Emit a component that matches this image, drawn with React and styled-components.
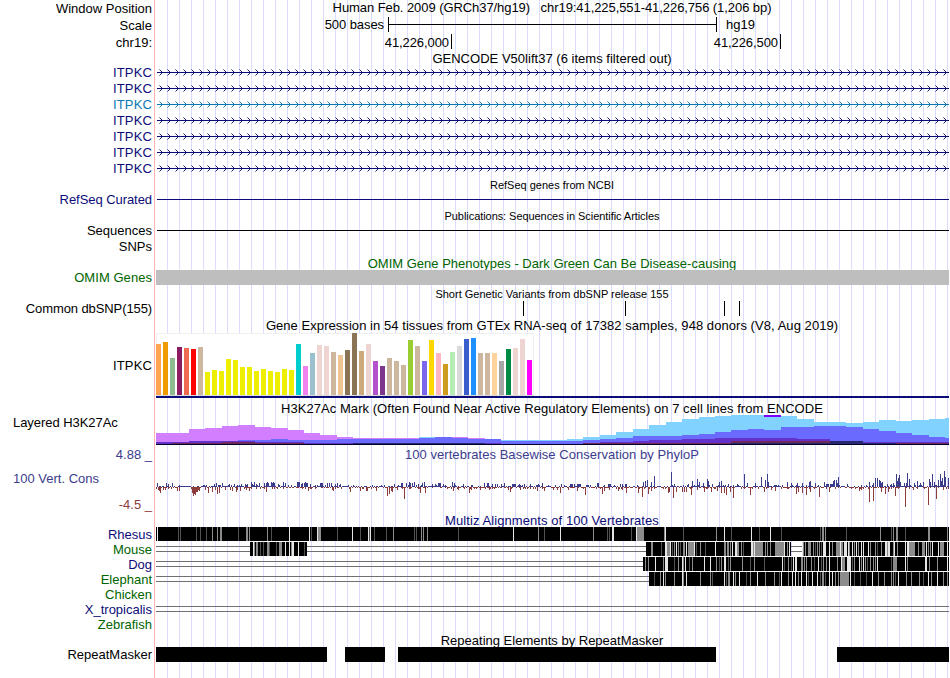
import React from 'react';
import styled, { createGlobalStyle } from 'styled-components';

const GlobalStyle = createGlobalStyle`
  body {
    margin: 0;
    background: #fff;
  }
`;

const NAVY = '#0c0c78';
const GREEN = '#006400';
const X0 = 156; // genome position 41,225,551 starts here
const WIDTH = 793;

const Browser = styled.main`
  display: flex;
  flex-direction: column;
  width: 949px;
  height: 678px;
  overflow: hidden;
  color: #000;
  font: 13px/15px 'Liberation Sans', Arial, sans-serif;
  background:
    linear-gradient(#ffb4b4, #ffb4b4) 154px 0 / 1px 100% no-repeat,
    repeating-linear-gradient(90deg, #dcdcff 0 1px, transparent 1px 12px) 167px 0 no-repeat;
`;

const Row = styled.div`
  display: grid;
  grid-template-columns: 152px ${WIDTH}px;
  column-gap: 4px;
  flex: none;
  height: ${(p) => p.$height}px;
`;

const Label = styled.div`
  align-self: center;
  text-align: right;
  white-space: nowrap;
  color: ${(p) => p.$color || '#000'};
  letter-spacing: ${(p) => p.$spacing || 0}px;
`;

const SideLabel = styled(Label)`
  align-self: start;
  text-align: left;
  padding-left: 13px;
`;

const Title = styled.div`
  display: flex;
  align-items: center;
  justify-content: center;
  box-sizing: border-box;
  height: ${(p) => p.$height}px;
  padding: ${(p) => p.$drop || 0}px 1px 0 0;
  color: ${(p) => p.$color || '#000'};
  font-size: ${(p) => (p.$small ? 11 : 13)}px;
  letter-spacing: ${(p) => p.$spacing || 0}px;
  white-space: pre;
`;

const Ruler = styled.div`
  display: flex;
  height: 15px;
`;

const ScaleText = styled.span`
  width: 228px;
  margin-right: 4px;
  text-align: right;
  letter-spacing: -0.08px;
`;

const ScaleBar = styled.div`
  box-sizing: border-box;
  width: 329px;
  margin-right: 9px;
  border: solid #000;
  border-width: 0 1px;
  background: linear-gradient(#000, #000) 0 7px / 100% 1px no-repeat;
`;

const Position = styled.span`
  box-sizing: border-box;
  width: ${(p) => p.$width}px;
  padding: 1px 2px 0 0;
  border-right: 1px solid #000;
  text-align: right;
  letter-spacing: -0.08px;
`;

const Drawing = styled.svg`
  display: block;
  width: ${WIDTH}px;
  height: ${(p) => p.$height}px;
  overflow: visible;
`;

const Line = styled.div`
  height: 1px;
  margin: 7px 0 0 1px;
  background: ${(p) => p.$color || '#000'};
`;

const Band = styled.div`
  height: 15px;
  background: #bebebe;
`;

const WigLabels = styled.div`
  display: flex;
  flex-direction: column;
  justify-content: space-between;
  padding-top: 8px;
  height: 41px;
`;

const LimitLabel = styled(Label)`
  align-self: flex-end;
`;

const TitleRow = ({ height, side, children, ...title }) => (
  <Row $height={height}>
    {side || <span />}
    <Title $height={height} {...title}>{children}</Title>
  </Row>
);

const GENES = [NAVY, NAVY, '#0c78b4', NAVY, NAVY, NAVY, NAVY];
const ARROWS = Array.from({ length: 99 }, (_, i) => 3.5 + i * 8);

const GeneTrack = ({ color }) => (
  <Drawing $height={16} stroke={color} fill="none">
    <path d="M1 8.5H793" shapeRendering="crispEdges" />
    <path d={ARROWS.map((x) => `M${x} 5.5l3 3l-3 3`).join('')} strokeWidth="0.95" />
  </Drawing>
);

// [color, height] per tissue
const TISSUES = [
  ['#ffa54f', 51], ['#ee9a00', 53], ['#8fbc8f', 37], ['#8b1c62', 48], ['#ee6a50', 47],
  ['#ff0000', 46], ['#cdb79e', 48], ['#eeee00', 23], ['#eeee00', 25], ['#eeee00', 24],
  ['#eeee00', 36], ['#eeee00', 35], ['#eeee00', 28], ['#eeee00', 28], ['#eeee00', 24],
  ['#eeee00', 26], ['#eeee00', 24], ['#eeee00', 23], ['#eeee00', 26], ['#eeee00', 25],
  ['#00cdcd', 51], ['#ee82ee', 29], ['#9ac0cd', 42], ['#eed5d2', 50], ['#eed5d2', 49],
  ['#cdb79e', 43], ['#eec591', 40], ['#8b7355', 45], ['#8b7355', 62], ['#cdaa7d', 44],
  ['#eed5d2', 51], ['#b452cd', 34], ['#7a378b', 29], ['#cdb79e', 37], ['#cdb79e', 34],
  ['#cdb79e', 30], ['#9acd32', 55], ['#cdb79e', 49], ['#7a67ee', 34], ['#ffd700', 55],
  ['#ffb6c1', 42], ['#cd9b1d', 31], ['#b4eeb4', 43], ['#d9d9d9', 49], ['#3a5fcd', 56],
  ['#1e90ff', 57], ['#cdb79e', 42], ['#cdb79e', 42], ['#ffd39b', 42], ['#a6a6a6', 34],
  ['#008b45', 46], ['#eed5d2', 47], ['#eed5d2', 56], ['#ff00ff', 35],
];

const GtexTrack = () => (
  <Drawing $height={65} shapeRendering="crispEdges">
    <rect width="378" height="63" fill="#f0f0f0" />
    <rect x="1" y="1" width="376" height="61" fill="#fff" />
    <rect y="62" width="378" height="1" fill="#dcdcdc" />
    {TISSUES.map(([color, h], i) => (
      <rect key={i} x={i * 7} y={62 - h} width="5" height={h} fill={color} />
    ))}
    <rect y="63" width={WIDTH} height="2" fill="#0c0c78" />
  </Drawing>
);

// heights of each cell line, one value for every 25 bases
const CELL_LINES = [
  {
    color: '#82d2ff',
    values: [0, 0, 0, 0, 0, 0, 0, 0, 0, 0, 0, 0, 0, 0, 0, 0, 7, 7, 0, 0, 0, 4, 4, 4, 4, 5, 7, 9, 12, 15, 19,
      22, 25, 27, 28, 29, 29, 29, 28, 25, 22, 22, 21, 22, 24, 23, 24, 25, 26],
  },
  {
    color: '#d27fff',
    values: [11, 11, 15, 16, 18, 19, 17, 16, 14, 11, 9, 7, 6, 6, 6, 6, 6, 7, 7, 6, 4],
  },
  {
    color: '#6a6aff',
    values: [2, 2, 2, 3, 3, 4, 4, 5, 4, 4, 4, 5, 5, 5, 5, 5, 6, 7, 6, 5, 5, 3, 3, 3, 3, 3, 4, 5, 6, 8, 8, 8,
      9, 10, 12, 14, 15, 14, 17, 17, 18, 18, 17, 15, 13, 11, 9, 7, 6],
  },
  {
    color: '#6432c8',
    values: [2, 2, 3, 3, 3, 3, 2, 2, 2, 1, 1, 1, 1, 1, 1, 1, 1, 1, 1, 1, 1, 0, 0, 0, 0, 0, 1, 2, 2, 3, 4, 4,
      5, 5, 6, 6, 6, 6, 6, 5, 5, 3, 3, 2, 2, 2, 2, 2, 2],
  },
  {
    color: '#6e285a',
    values: [0, 1, 1, 1, 2, 2, 1, 1, 1, 0, 0, 0, 0, 0, 0, 0, 0, 0, 0, 0, 0, 0, 0, 0, 0, 0, 1, 1, 1, 1, 1, 1,
      1, 1, 1, 3, 3, 3, 3, 3, 3, 2, 1, 1, 1, 1, 1, 1, 1],
  },
  {
    color: '#28286e',
    values: [0, 0, 0, 0, 0, 0, 0, 0, 0, 0, 0, 0, 1, 1, 1, 1, 1, 1, 1, 1, 0, 0, 0, 0, 0, 0, 0, 0, 0, 0, 0, 0,
      0, 0, 0, 1, 1, 1, 1, 1, 1, 3, 3, 1, 1, 0, 0, 0, 0],
  },
];

const edge = (i) => Math.min(WIDTH, Math.round(i * 16.44));

const LayeredTrack = () => (
  <Drawing $height={30} shapeRendering="crispEdges">
    {CELL_LINES.map(({ color, values }) => (
      <g key={color} fill={color}>
        {values.map((v, i) => (
          <rect key={i} x={edge(i)} y={29 - v} width={edge(i + 1) - edge(i)} height={v} />
        ))}
      </g>
    ))}
    <rect x="608" width="17" height="2" fill="#8000ff" />
    <rect y="29" width={WIDTH} height="1" fill="#000028" />
  </Drawing>
);

const CONSERVED = [
  [157, 4], [166, 4], [168, 3], [172, 4], [214, 3], [216, 4], [222, 4], [229, 3], [234, 3], [241, 3],
  [245, 3], [247, 3], [251, 5], [252, 3], [254, 5], [256, 3], [259, 4], [264, 4], [266, 4], [267, 5],
  [268, 4], [271, 5], [272, 4], [273, 5], [274, 4], [278, 3], [283, 5], [285, 4], [297, 5], [298, 5],
  [299, 5], [301, 3], [302, 4], [304, 4], [305, 5], [306, 4], [307, 4], [310, 3], [315, 2], [320, 4],
  [321, 4], [322, 4], [327, 4], [329, 4], [331, 4], [335, 3], [337, 4], [340, 3], [384, 2], [394, 3],
  [401, 4], [402, 4], [406, 4], [409, 5], [410, 4], [412, 4], [414, 5], [418, 3], [422, 4], [424, 5],
  [432, 3], [435, 3], [438, 4], [439, 4], [440, 4], [443, 3], [445, 2], [452, 5], [454, 4], [463, 3],
  [484, 4], [487, 4], [488, 4], [492, 3], [495, 3], [497, 3], [501, 3], [504, 4], [512, 3], [513, 3],
  [514, 3], [515, 3], [519, 3], [524, 3], [530, 3], [538, 3], [542, 4], [548, 2], [561, 3], [564, 2],
  [570, 3], [571, 3], [572, 3], [574, 3], [577, 3], [578, 3], [579, 3], [580, 3], [588, 2], [597, 4],
  [598, 4], [608, 3], [609, 3], [610, 3], [620, 3], [622, 3], [625, 3], [626, 3], [643, 5], [645, 6],
  [647, 7], [651, 5], [654, 11], [671, 15], [674, 3], [688, 3], [692, 6], [697, 8], [699, 5], [703, 4],
  [707, 8], [708, 6], [712, 3], [719, 5], [721, 6], [728, 3], [737, 3], [744, 13], [747, 4], [755, 4],
  [761, 10], [765, 7], [767, 13], [768, 5], [774, 2], [787, 5], [791, 4], [797, 4], [802, 4], [809, 5],
  [810, 6], [815, 4], [824, 5], [826, 3], [827, 3], [828, 3], [830, 3], [831, 3], [832, 3], [833, 6],
  [834, 7], [836, 7], [837, 4], [838, 10], [847, 3], [869, 5], [873, 4], [875, 9], [877, 9], [879, 7],
  [880, 6], [881, 4], [882, 5], [887, 3], [891, 3], [893, 4], [896, 13], [897, 6], [898, 9], [899, 12],
  [900, 5], [904, 4], [906, 4], [907, 14], [909, 8], [914, 4], [917, 6], [920, 4], [923, 5], [929, 8],
  [930, 5], [932, 13], [934, 5], [938, 7], [940, 13], [941, 6], [942, 9], [944, 16], [945, 10], [948, 9],
];

const ACCELERATED = [
  [158, 3], [159, 4], [160, 6], [163, 3], [165, 3], [177, 4], [179, 4], [192, 6], [193, 9], [194, 7],
  [195, 8], [196, 5], [197, 5], [198, 3], [199, 4], [205, 3], [208, 6], [212, 5], [215, 3], [217, 7],
  [219, 6], [225, 3], [230, 3], [232, 4], [236, 5], [237, 3], [240, 4], [246, 3], [249, 4], [260, 2],
  [266, 5], [308, 4], [332, 3], [333, 4], [350, 5], [360, 4], [366, 4], [367, 4], [376, 4], [387, 9],
  [389, 7], [391, 4], [392, 5], [397, 3], [404, 12], [420, 6], [425, 6], [453, 4], [458, 3], [469, 6],
  [471, 3], [480, 3], [489, 3], [508, 3], [510, 5], [520, 3], [537, 4], [544, 4], [553, 3], [557, 3],
  [560, 6], [568, 3], [577, 4], [585, 8], [602, 7], [604, 4], [609, 3], [618, 4], [622, 3], [626, 6],
  [638, 6], [642, 10], [648, 7], [651, 4], [668, 6], [669, 5], [673, 11], [676, 5], [682, 5], [684, 5],
  [686, 5], [691, 8], [697, 3], [704, 5], [711, 5], [717, 4], [721, 6], [724, 6], [726, 8], [730, 5],
  [733, 11], [750, 8], [764, 5], [771, 3], [775, 4], [796, 7], [798, 5], [802, 6], [806, 8], [810, 5],
  [819, 10], [829, 5], [859, 4], [861, 3], [869, 15], [873, 14], [881, 5], [885, 7], [888, 5], [895, 9],
  [905, 20], [913, 3], [928, 18], [936, 12], [943, 3],
];

// small scores between the peaks
const noise = (x) => {
  const n = Math.sin(x * 12.9898) * 43758.5453;
  return n - Math.floor(n);
};
const QUIET = Array.from({ length: WIDTH }, (_, i) => {
  const n = noise(i + 1);
  if ((i > 23 && i < 35) || (i > 185 && i < 192)) return [i, 1];
  if (n < 0.16) return [i, 2];
  if (n < 0.52) return [i, 1];
  if (n < 0.88) return [i, -1];
  return [i, -2];
});

const WiggleTrack = () => (
  <Drawing $height={49} shapeRendering="crispEdges">
    {QUIET.map(([x, v]) => (
      <rect key={x} x={x} y={v > 0 ? 24 - v : 24} width="1" height={Math.abs(v)} fill={v > 0 ? '#3c3c8c' : '#8c3c3c'} />
    ))}
    <g fill="#3c3c8c">
      {CONSERVED.map(([x, h]) => <rect key={x} x={x - X0} y={24 - h} width="1" height={h} />)}
    </g>
    <g fill="#8c3c3c">
      {ACCELERATED.map(([x, h]) => <rect key={x} x={x - X0} y="24" width="1" height={h} />)}
    </g>
  </Drawing>
);

const SHADES = { w: '#e6e6e6', g: '#8c8c8c', d: '#505050' };

// marks are "<x><shade>" or "<x><shade><width>"
const SPECIES = [
  {
    name: 'Rhesus',
    color: NAVY,
    blocks: [[156, 949]],
    marks: '157w 178d 180d 196d 200d 206d 212g 217g 220g2 238d 246g2 249g 267g 271d 289w 309w 311d 317w 318g3 337d 352w 360d 368w 370w 369d 374d 386d 393g 414d 416d 421g 423g 427g 458d 513w 538g 544d 560w 593g 607d 609d 612w2 631d 636w 637g7 664g 665w 683d 716g 724w 731d 751w 759d 770w 781d 820d 822g 823g 825g 846d 880g 891d 893g 896g2 905d 928g2 947g',
  },
  {
    name: 'Mouse',
    color: GREEN,
    chain: true,
    blocks: [[250, 307], [646, 791], [802, 949]],
    marks: '253w 254g 256g2 260d 263d 267g2 269d 276d 279g3 285w 289w 291g 292w2 298w 304d 651g2 661d 665w2 667g3 670w 672d 674g 676w 678g 680d 683g2 686w 688g6 694w 696d 700g 705d 715w 724g2 727g2 730g 732w 735w2 737g2 741g 743d 751w2 753g 754w 755g8 765g 767g 770g 775g9 784w 787g 789w 802w 803g 805g 808g3 813g 815d 817g 819g 821d 823w 824w2 829w 832g 836g4 840w 841g2 844w3 848w 849g 852w 854g 856w 858g 861w 863w 868w 870g 875g 877d 881g 885w2 887g 888w 889w 893g 894w 897g 905w 907w2 909g6 918g 922g2 924g 926w 928g 930g 932w 938w 940g4 947w',
  },
  {
    name: 'Dog',
    color: NAVY,
    chain: true,
    blocks: [[643, 949]],
    marks: '645g 648g 655w 663g 665w3 674d 678g 682w 683g 685w 689d 692g 704w 710w 716g 719d 721g 724w2 728d 730g 742g 750d 754g 764d 782w 784d 788g 791d 793w 795w2 801g2 804g 806g 811g 814d 818w 821d 823g 826g 829w 837g 841w 842g3 847w 848w3 852d 854g 859w 861g 863w 865g 867d 870g 873g 875g 877w 891d 893g4 905w 907g 925w2 929g 937g 947w',
  },
  {
    name: 'Elephant',
    color: GREEN,
    chain: true,
    blocks: [[649, 949]],
    marks: '654d 660g 663w 665g 674g 682w 683g 686w 700g 710g 712d 724w 726d 728g2 733w 735g 739w 746d 750g 757w 765g 774g 779d 781w 788g 792w 795w 798g 801w 806w 808d 812w 817w 820d 822g2 825d 829w 832w 835g 838g 840g9 850w 854d 860d 866d 872w 878g 884g 891g 893g 895d 898w 906g 911g 919g 923d 928w 931g 937w 943g 947g',
  },
  { name: 'Chicken', color: GREEN, blocks: [], marks: '' },
  { name: 'X_tropicalis', color: NAVY, chain: true, blocks: [], marks: '' },
  { name: 'Zebrafish', color: GREEN, blocks: [], marks: '' },
];

const AlignmentTrack = ({ chain, blocks, marks }) => (
  <Drawing $height={15} shapeRendering="crispEdges">
    {chain && <path d="M0 4.5H793M0 9.5H793" stroke="#707070" />}
    {blocks.map(([from, to]) => (
      <rect key={from} x={from - X0} width={to - from} height="14" />
    ))}
    {marks && marks.split(' ').map((mark) => {
      const [, x, shade, w] = mark.match(/(\d+)([wgd])(\d*)/);
      return <rect key={mark} x={x - X0} width={w || 1} height="14" fill={SHADES[shade]} />;
    })}
  </Drawing>
);

const SNPS = [523, 625, 724, 739];
const REPEATS = [[156, 327], [345, 385], [398, 716], [837, 949]];

const App = () => (
  <>
    <GlobalStyle />
    <Browser>
      <Row $height={17}>
        <Label>Window Position</Label>
        <Title $height={15} $spacing={-0.07}>{'Human Feb. 2009 (GRCh37/hg19)   chr19:41,225,551-41,226,756 (1,206 bp)'}</Title>
      </Row>
      <Row $height={17}>
        <Label>Scale</Label>
        <Ruler>
          <ScaleText>500 bases</ScaleText>
          <ScaleBar />
          <span>hg19</span>
        </Ruler>
      </Row>
      <Row $height={17}>
        <Label>chr19:</Label>
        <Ruler>
          <Position $width={296}>41,226,000</Position>
          <Position $width={329}>41,226,500</Position>
        </Ruler>
      </Row>

      <TitleRow height={13} $drop={2} $spacing={0.02}>GENCODE V50lift37 (6 items filtered out)</TitleRow>
      {GENES.map((color, i) => (
        <Row key={i} $height={16}>
          <Label $color={color} $spacing={0.15}>ITPKC</Label>
          <GeneTrack color={color} />
        </Row>
      ))}

      <TitleRow height={16} $small $drop={2}>RefSeq genes from NCBI</TitleRow>
      <Row $height={15}>
        <Label $color={NAVY} $spacing={-0.06}>RefSeq Curated</Label>
        <Line $color={NAVY} />
      </Row>

      <TitleRow height={16} $small $drop={2} $spacing={-0.06}>Publications: Sequences in Scientific Articles</TitleRow>
      <Row $height={15}>
        <Label>Sequences</Label>
        <Line />
      </Row>
      <Row $height={16}>
        <Label>SNPs</Label>
      </Row>

      <TitleRow height={16} $color={GREEN} $drop={3}>OMIM Gene Phenotypes - Dark Green Can Be Disease-causing</TitleRow>
      <Row $height={15}>
        <Label $color={GREEN} $spacing={0.05}>OMIM Genes</Label>
        <Band />
      </Row>

      <TitleRow height={16} $small $drop={2}>Short Genetic Variants from dbSNP release 155</TitleRow>
      <Row $height={15}>
        <Label $spacing={-0.1}>Common dbSNP(155)</Label>
        <Drawing $height={15} shapeRendering="crispEdges">
          {SNPS.map((x) => <rect key={x} x={x - X0} width="1" height="15" />)}
        </Drawing>
      </Row>

      <TitleRow height={17} $drop={2} $spacing={0.055}>Gene Expression in 54 tissues from GTEx RNA-seq of 17382 samples, 948 donors (V8, Aug 2019)</TitleRow>
      <Row $height={65}>
        <Label $spacing={0.15}>ITPKC</Label>
        <GtexTrack />
      </Row>

      <TitleRow height={17} $drop={4} $spacing={0.05}>H3K27Ac Mark (Often Found Near Active Regulatory Elements) on 7 cell lines from ENCODE</TitleRow>
      <Row $height={30}>
        <SideLabel $spacing={-0.05}>Layered H3K27Ac</SideLabel>
        <LayeredTrack />
      </Row>

      <TitleRow height={18} $color="#3c3c8c" $spacing={0.04} side={<Label $color="#3c3c8c">4.88 _</Label>}>
        100 vertebrates Basewise Conservation by PhyloP
      </TitleRow>
      <Row $height={49}>
        <WigLabels>
          <SideLabel $color="#3c3c8c">100 Vert. Cons</SideLabel>
          <LimitLabel $color="#8c3c3c">-4.5 _</LimitLabel>
        </WigLabels>
        <WiggleTrack />
      </Row>

      <TitleRow height={15} $color={NAVY} $drop={2} $spacing={0.08}>Multiz Alignments of 100 Vertebrates</TitleRow>
      {SPECIES.map((s) => (
        <Row key={s.name} $height={15}>
          <Label $color={s.color}>{s.name}</Label>
          <AlignmentTrack chain={s.chain} blocks={s.blocks} marks={s.marks} />
        </Row>
      ))}

      <TitleRow height={15} $drop={2}>Repeating Elements by RepeatMasker</TitleRow>
      <Row $height={15}>
        <Label>RepeatMasker</Label>
        <Drawing $height={15} shapeRendering="crispEdges">
          {REPEATS.map(([from, to]) => (
            <rect key={from} x={from - X0} width={to - from} height="15" />
          ))}
        </Drawing>
      </Row>
    </Browser>
  </>
);

export default App;
